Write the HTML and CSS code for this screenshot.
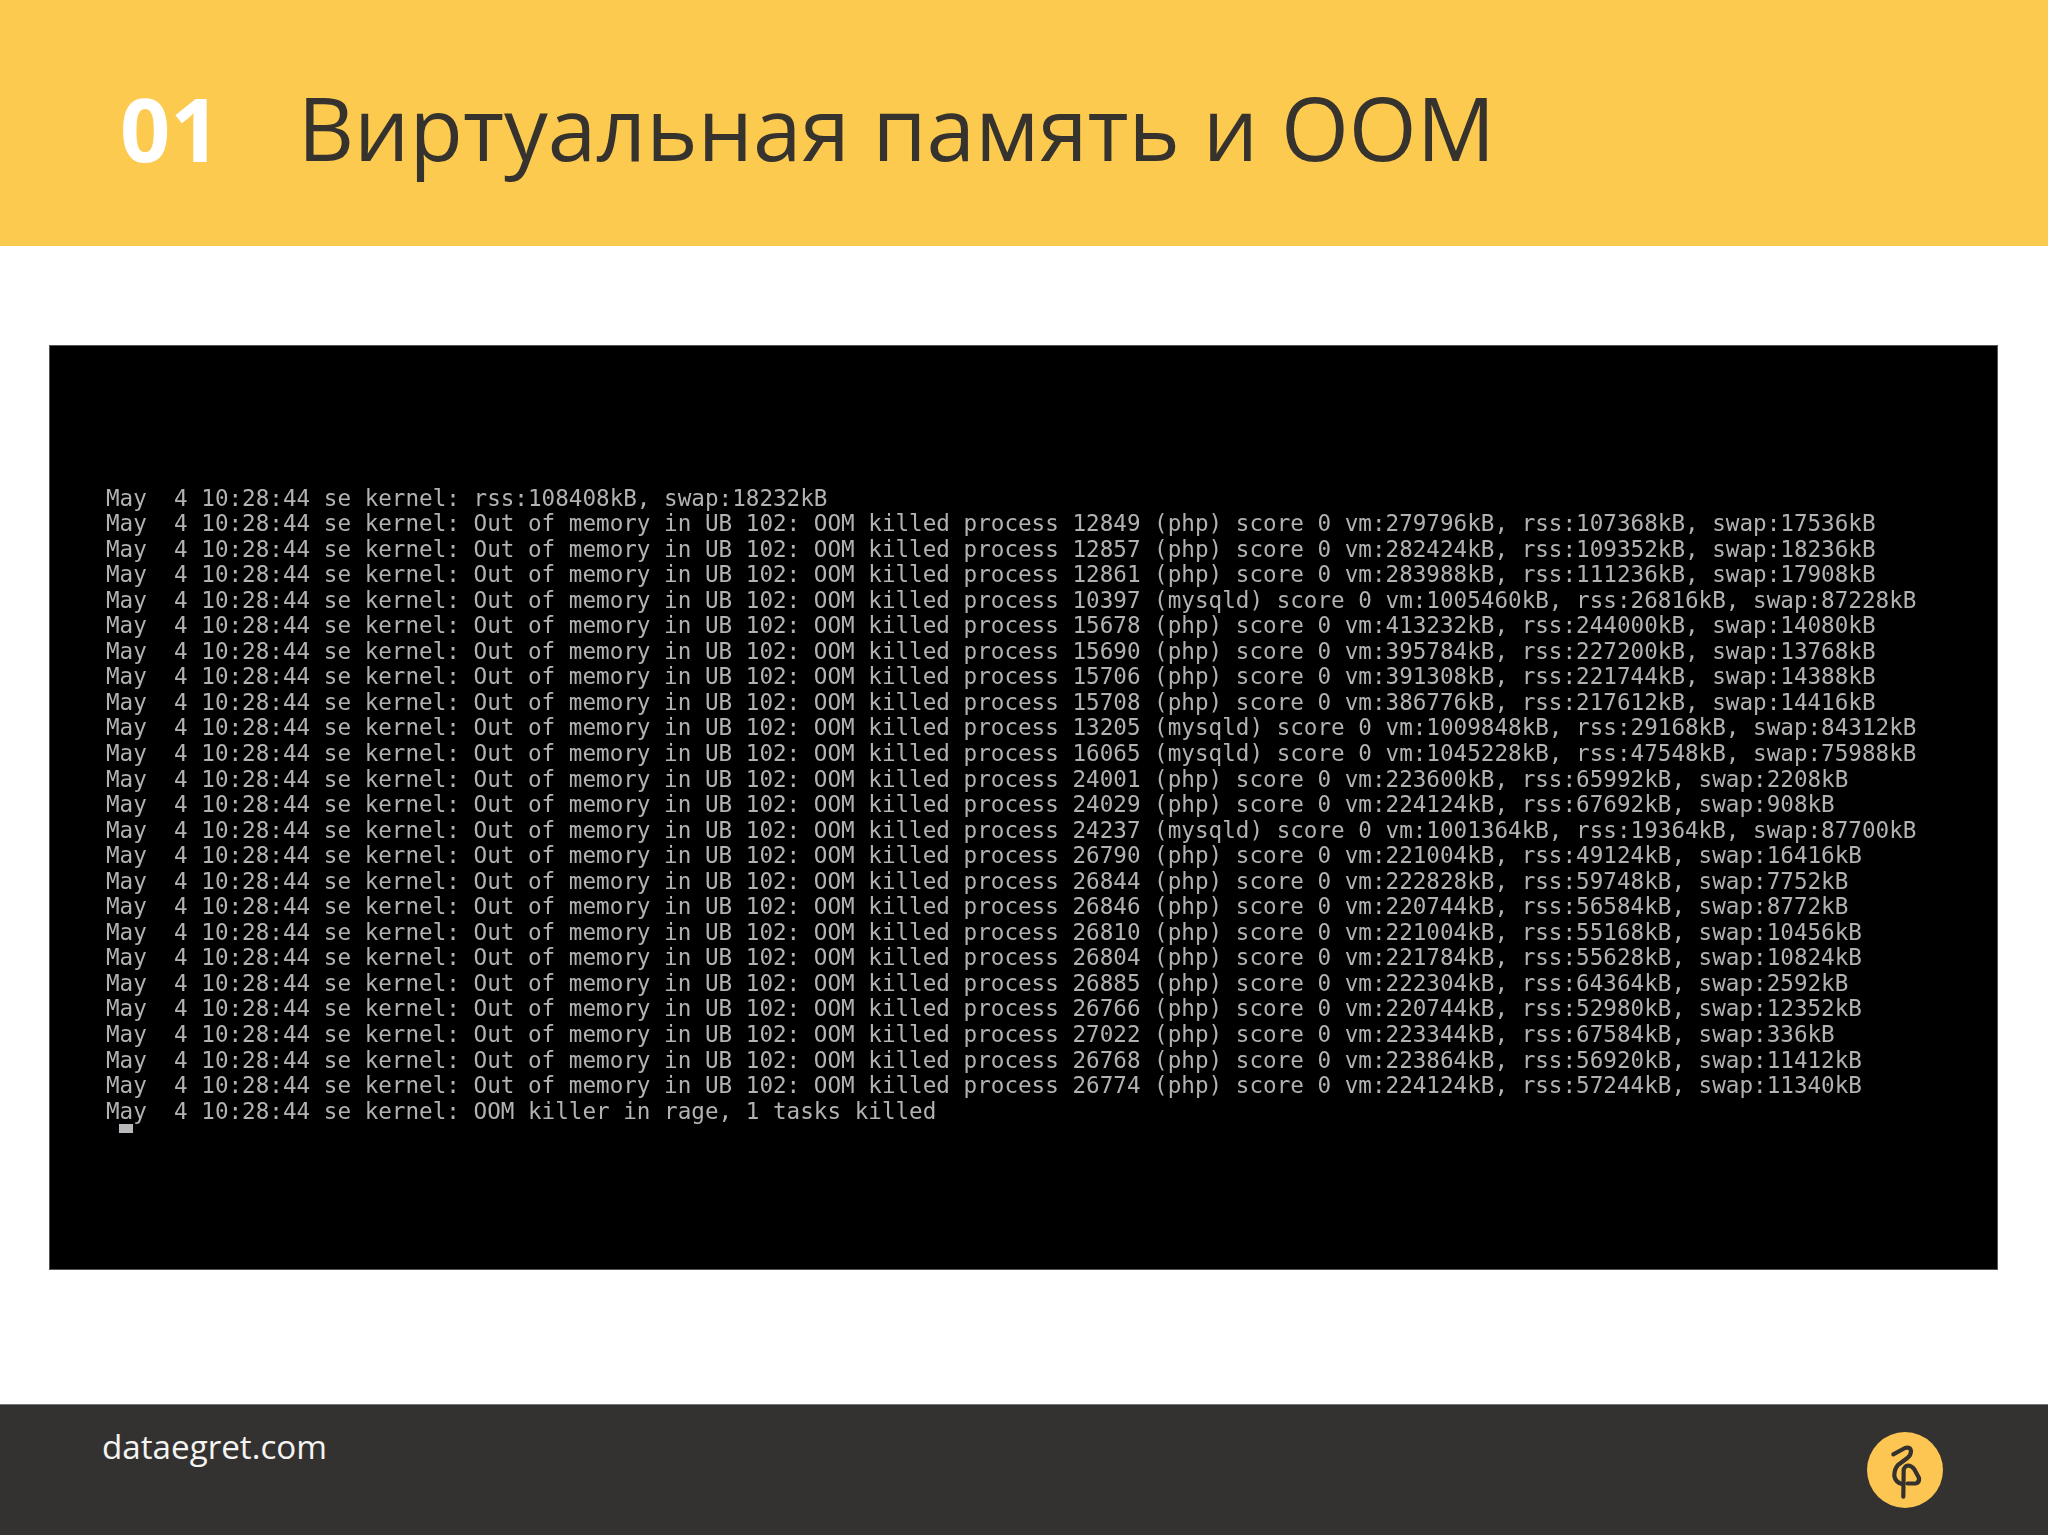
FILE: index.html
```html
<!DOCTYPE html>
<html lang="ru">
<head>
<meta charset="utf-8">
<title>Виртуальная память и OOM</title>
<link rel="stylesheet" href="styles.css">
</head>
<body>
<div class="slide">
  <header class="head">
    <span class="num">01</span>
    <h1 class="title">Виртуальная память и OOM</h1>
  </header>
  <main class="body">
    <div class="term">
<pre class="log">May  4 10:28:44 se kernel: rss:108408kB, swap:18232kB
May  4 10:28:44 se kernel: Out of memory in UB 102: OOM killed process 12849 (php) score 0 vm:279796kB, rss:107368kB, swap:17536kB
May  4 10:28:44 se kernel: Out of memory in UB 102: OOM killed process 12857 (php) score 0 vm:282424kB, rss:109352kB, swap:18236kB
May  4 10:28:44 se kernel: Out of memory in UB 102: OOM killed process 12861 (php) score 0 vm:283988kB, rss:111236kB, swap:17908kB
May  4 10:28:44 se kernel: Out of memory in UB 102: OOM killed process 10397 (mysqld) score 0 vm:1005460kB, rss:26816kB, swap:87228kB
May  4 10:28:44 se kernel: Out of memory in UB 102: OOM killed process 15678 (php) score 0 vm:413232kB, rss:244000kB, swap:14080kB
May  4 10:28:44 se kernel: Out of memory in UB 102: OOM killed process 15690 (php) score 0 vm:395784kB, rss:227200kB, swap:13768kB
May  4 10:28:44 se kernel: Out of memory in UB 102: OOM killed process 15706 (php) score 0 vm:391308kB, rss:221744kB, swap:14388kB
May  4 10:28:44 se kernel: Out of memory in UB 102: OOM killed process 15708 (php) score 0 vm:386776kB, rss:217612kB, swap:14416kB
May  4 10:28:44 se kernel: Out of memory in UB 102: OOM killed process 13205 (mysqld) score 0 vm:1009848kB, rss:29168kB, swap:84312kB
May  4 10:28:44 se kernel: Out of memory in UB 102: OOM killed process 16065 (mysqld) score 0 vm:1045228kB, rss:47548kB, swap:75988kB
May  4 10:28:44 se kernel: Out of memory in UB 102: OOM killed process 24001 (php) score 0 vm:223600kB, rss:65992kB, swap:2208kB
May  4 10:28:44 se kernel: Out of memory in UB 102: OOM killed process 24029 (php) score 0 vm:224124kB, rss:67692kB, swap:908kB
May  4 10:28:44 se kernel: Out of memory in UB 102: OOM killed process 24237 (mysqld) score 0 vm:1001364kB, rss:19364kB, swap:87700kB
May  4 10:28:44 se kernel: Out of memory in UB 102: OOM killed process 26790 (php) score 0 vm:221004kB, rss:49124kB, swap:16416kB
May  4 10:28:44 se kernel: Out of memory in UB 102: OOM killed process 26844 (php) score 0 vm:222828kB, rss:59748kB, swap:7752kB
May  4 10:28:44 se kernel: Out of memory in UB 102: OOM killed process 26846 (php) score 0 vm:220744kB, rss:56584kB, swap:8772kB
May  4 10:28:44 se kernel: Out of memory in UB 102: OOM killed process 26810 (php) score 0 vm:221004kB, rss:55168kB, swap:10456kB
May  4 10:28:44 se kernel: Out of memory in UB 102: OOM killed process 26804 (php) score 0 vm:221784kB, rss:55628kB, swap:10824kB
May  4 10:28:44 se kernel: Out of memory in UB 102: OOM killed process 26885 (php) score 0 vm:222304kB, rss:64364kB, swap:2592kB
May  4 10:28:44 se kernel: Out of memory in UB 102: OOM killed process 26766 (php) score 0 vm:220744kB, rss:52980kB, swap:12352kB
May  4 10:28:44 se kernel: Out of memory in UB 102: OOM killed process 27022 (php) score 0 vm:223344kB, rss:67584kB, swap:336kB
May  4 10:28:44 se kernel: Out of memory in UB 102: OOM killed process 26768 (php) score 0 vm:223864kB, rss:56920kB, swap:11412kB
May  4 10:28:44 se kernel: Out of memory in UB 102: OOM killed process 26774 (php) score 0 vm:224124kB, rss:57244kB, swap:11340kB
May  4 10:28:44 se kernel: OOM killer in rage, 1 tasks killed</pre>
      <div class="cursor"></div>
    </div>
  </main>
  <footer class="foot">
    <span class="site">dataegret.com</span>
    <svg class="logo" viewBox="0 0 76 76" aria-hidden="true">
      <circle cx="38" cy="38" r="38" fill="#fdc652"/>
      <path d="M26.3 22.3 L38 16 Q43.5 14.5 44 19 Q44 23 40.7 25.7 L31 33 Q27.3 37 27.3 44 Q28.5 50.5 35.7 52.3" fill="none" stroke="#35312e" stroke-width="4.2" stroke-linecap="round" stroke-linejoin="round"/>
      <path d="M36.3 64.7 L36.7 37.3 Q38 34 41 33.5 Q44.5 33.5 47.3 37.3 L52 46 Q52.5 50.5 49 51.3 L40.7 51.5" fill="none" stroke="#35312e" stroke-width="4.2" stroke-linecap="round" stroke-linejoin="round"/>
    </svg>
  </footer>
</div>
</body>
</html>
```

FILE: styles.css
```css
* { box-sizing: border-box; }
html, body { margin: 0; padding: 0; background: #fff; }
.slide {
  width: 2048px;
  height: 1535px;
  display: flex;
  flex-direction: column;
  overflow: hidden;
}
.head {
  height: 246px;
  flex: none;
  background: #fdca50;
  display: flex;
  align-items: center;
  padding: 9px 0 0 120px;
  gap: 77px;
  font-family: "Open Sans", sans-serif;
  line-height: 1;
}
.num { font-size: 88px; font-weight: 700; color: #fff; }
.title { margin: 0; font-size: 87.3px; font-weight: 400; color: #36332f; }
.body {
  flex: 1;
  padding: 99px 50px 0 49px;
}
.term {
  height: 925px;
  background: #000;
  border: 1px solid #555;
  padding: 139.5px 0 0 56px;
}
.log {
  margin: 0;
  font-family: "DejaVu Sans Mono", monospace;
  font-size: 22.62px;
  line-height: 25.55px;
  color: #b2b2b2;
  filter: blur(0.45px);
}
.cursor {
  width: 14px;
  height: 9px;
  margin: 0 0 0 13px;
  background: #b9b9bd;
}
.foot {
  height: 131px;
  flex: none;
  background: #333231;
  border-top: 1px solid #777;
  display: flex;
  justify-content: space-between;
  align-items: flex-start;
  padding: 19px 105px 0 102px;
  font-family: "Open Sans", sans-serif;
}
.site { font-size: 33.2px; line-height: 46px; color: #f4f4f2; }
.logo { width: 76px; height: 76px; margin-top: 8px; }
```
